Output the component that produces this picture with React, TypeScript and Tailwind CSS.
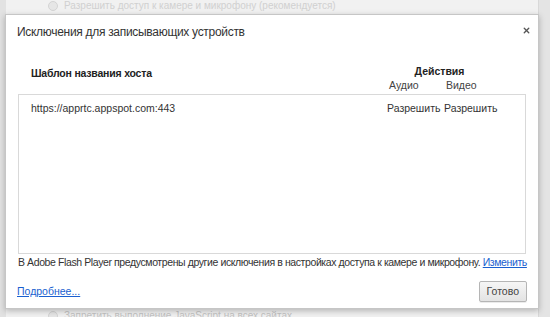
import { X } from 'lucide-react'

const rows = [{ host: 'https://apprtc.appspot.com:443', audio: 'Разрешить', video: 'Разрешить' }]

export default function App() {
  return (
    <div
      className="relative w-[550px] h-[317px] overflow-hidden bg-[#ececec] text-[#333]"
      style={{ fontFamily: '"Liberation Sans", Arial, sans-serif' }}
    >
      {/* page behind the overlay */}
      <div className="flex h-full">
        <div className="w-[6px] bg-[#e2e2e2]" />
        <div className="flex-1 flex flex-col justify-between bg-[#f1f1f1] pl-[42px]">
          <div className="flex items-center gap-[6px] -mt-[2px] text-[10px] text-[#d0d0d0]">
            <span className="w-[10px] h-[10px] rounded-full border border-[#d4d4d4] bg-[#e6e6e6]" />
            <span>Разрешить доступ к камере и микрофону (рекомендуется)</span>
          </div>
          <div className="flex items-center gap-[6px] -mb-[6px] text-[10px] text-[#c4c4c4]">
            <span className="w-[10px] h-[10px] rounded-full border border-[#d4d4d4] bg-[#e6e6e6]" />
            <span>Запретить выполнение JavaScript на всех сайтах</span>
          </div>
        </div>
        <div className="w-[12px] bg-[#e4e4e4] border-l border-[#d8d8d8]" />
      </div>

      {/* dialog */}
      <div className="absolute left-[5px] top-[14px] w-[534px] h-[295px] bg-white border border-[#c6c6c6] shadow-[0_2px_6px_rgba(0,0,0,0.25)] flex flex-col">
        <div className="flex items-start justify-between pl-[11px] pr-[7px] pt-[8px]">
          <h1 className="text-[12px] tracking-[-0.3px] text-[#333]">Исключения для записывающих устройств</h1>
          <X className="w-[9px] h-[9px] mt-[3px] text-[#555]" strokeWidth={3.6} />
        </div>

        <div className="px-[12px] mt-[19px]">
          <div className="flex items-end h-[34px] pb-[2px] text-[10.5px]">
            <div className="flex-1 pl-[13px] self-start pt-[6px] font-bold tracking-[-0.2px] text-[#222]">Шаблон названия хоста</div>
            <div className="w-[138px] flex flex-col">
              <div className="w-[103px] text-center font-bold text-[#222] leading-[14px]">Действия</div>
              <div className="flex text-[#444] leading-[14px]">
                <span className="w-[57px] pl-[1px]">Аудио</span>
                <span className="w-[57px] pl-[1px]">Видео</span>
              </div>
            </div>
          </div>

          <div className="h-[160px] border border-[#d9d9d9] pt-[5px]">
            {rows.map((r) => (
              <div key={r.host} className="flex items-center h-[18px] text-[10.5px] text-[#333]">
                <div className="flex-1 pl-[12px]">{r.host}</div>
                <div className="w-[138px] flex">
                  <span className="w-[57px]">{r.audio}</span>
                  <span className="w-[57px]">{r.video}</span>
                </div>
              </div>
            ))}
          </div>

          <p className="mt-[1px] text-[10.5px] text-[#333] whitespace-nowrap tracking-[-0.4px]">
            В Adobe Flash Player предусмотрены другие исключения в настройках доступа к камере и микрофону.{' '}
            <a className="text-[#1a5fd0] underline">Изменить</a>
          </p>
        </div>

        <div className="mt-auto flex items-center justify-between pl-[11px] pr-[11px] pb-[6px]">
          <a className="text-[10.5px] text-[#1a5fd0] underline">Подробнее...</a>
          <button className="h-[21px] px-[7px] rounded-[2px] border border-[#b5b5b5] bg-gradient-to-b from-[#f6f6f6] to-[#e3e3e3] text-[10.5px] text-[#444] shadow-[0_1px_0_rgba(0,0,0,0.08)]">
            Готово
          </button>
        </div>
      </div>
    </div>
  )
}
